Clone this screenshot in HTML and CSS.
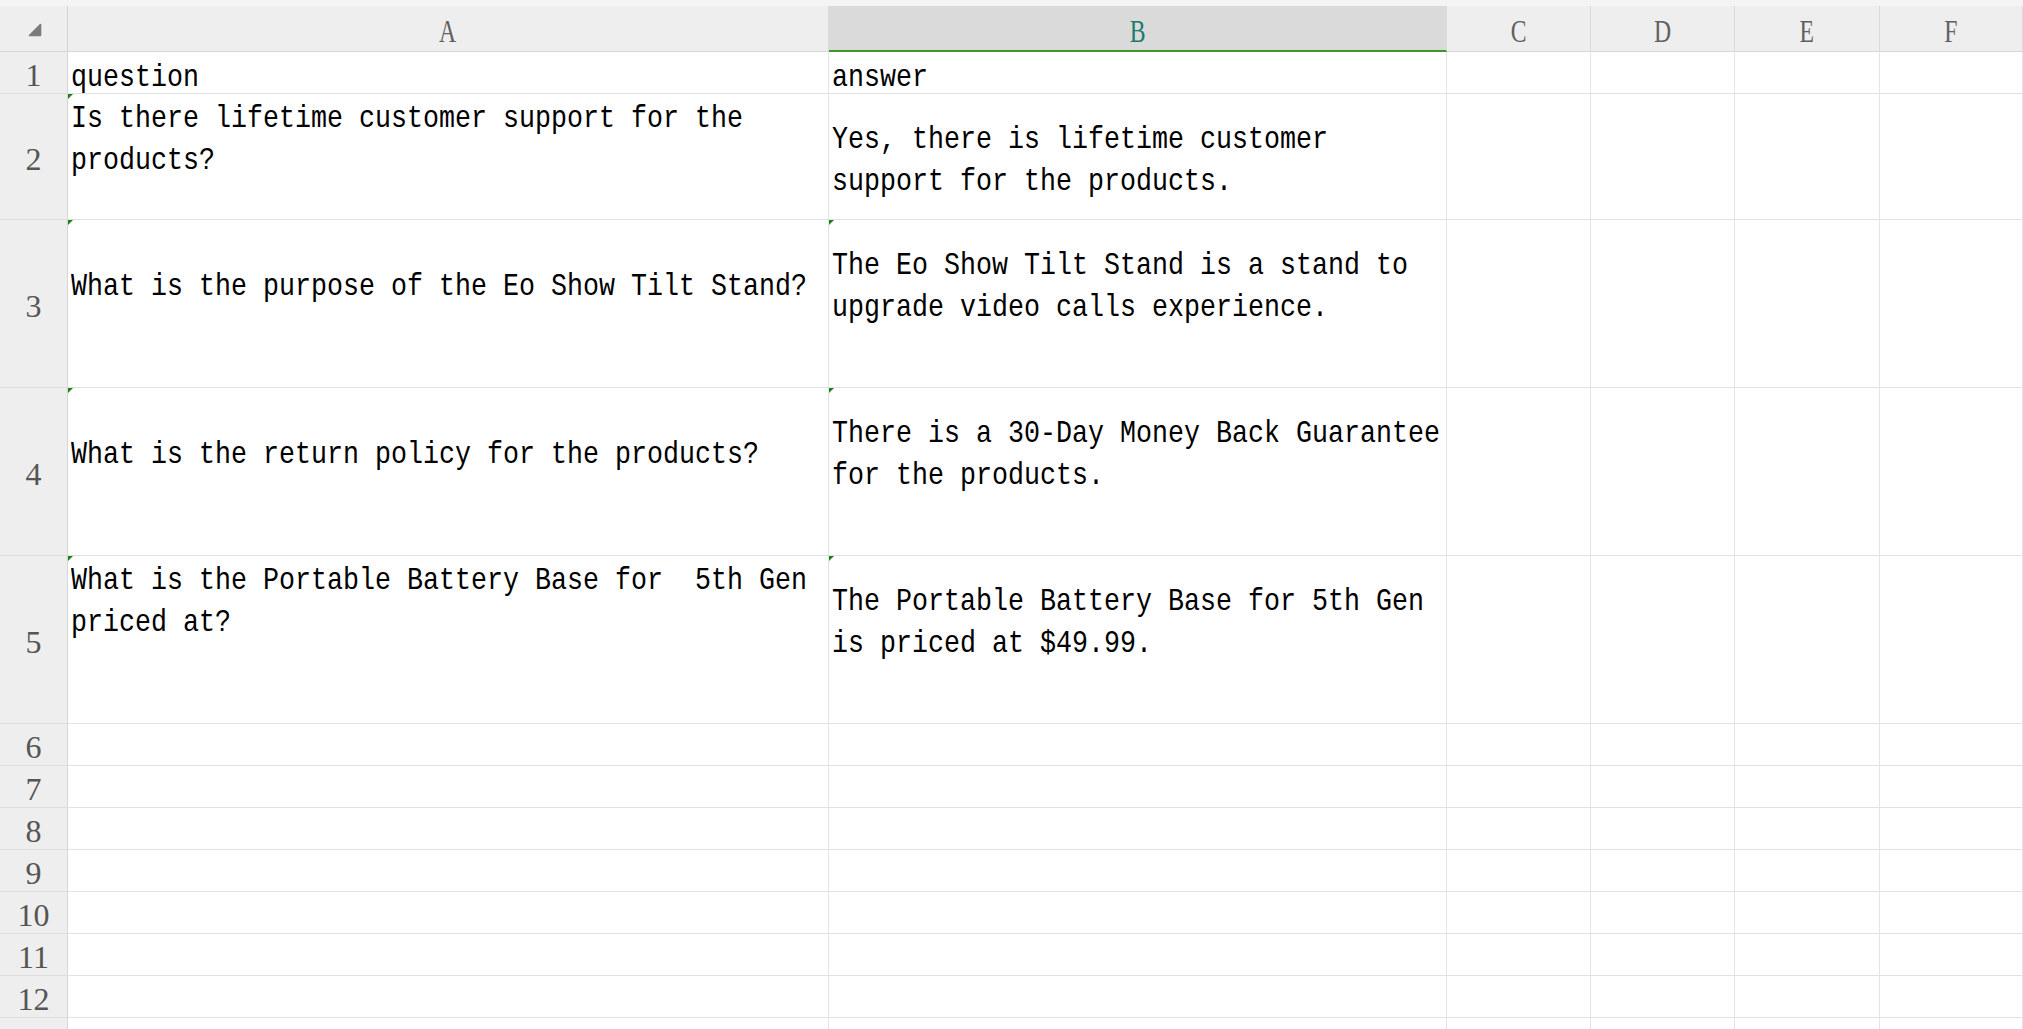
FILE: index.html
```html
<!DOCTYPE html>
<html lang="en">

<head>
    <meta charset="UTF-8">
    <meta name="viewport" content="width=device-width, initial-scale=1.0">
    <title>Sheet1</title>
    <link rel="stylesheet" href="styles.css">
</head>

<body>
    <div class="sheet">
        <div class="corner">
            <svg width="14" height="14" viewBox="0 0 14 14">
                <path d="M12.5 1.5 L12.5 12.5 L1.5 12.5 Z" fill="#7b7b7b" stroke="#7b7b7b" stroke-width="1.6" stroke-linejoin="round" />
            </svg>
        </div>
        <div class="col"><span>A</span></div>
        <div class="col sel"><span>B</span></div>
        <div class="col"><span>C</span></div>
        <div class="col"><span>D</span></div>
        <div class="col"><span>E</span></div>
        <div class="col"><span>F</span></div>

        <!-- row 1 -->
        <div class="num">1</div>
        <div class="cell t0"><span class="txt">question</span></div>
        <div class="cell t0"><span class="txt">answer</span></div>
        <div class="cell"></div><div class="cell"></div><div class="cell"></div><div class="cell"></div>

        <!-- row 2 -->
        <div class="num">2</div>
        <div class="cell t1 flag"><span class="txt">Is there lifetime customer support for the<br>products?</span></div>
        <div class="cell t2"><span class="txt">Yes, there is lifetime customer<br>support for the products.</span></div>
        <div class="cell"></div><div class="cell"></div><div class="cell"></div><div class="cell"></div>

        <!-- row 3 -->
        <div class="num">3</div>
        <div class="cell t3 flag"><span class="txt">What is the purpose of the Eo Show Tilt Stand?</span></div>
        <div class="cell t2 flag"><span class="txt">The Eo Show Tilt Stand is a stand to<br>upgrade video calls experience.</span></div>
        <div class="cell"></div><div class="cell"></div><div class="cell"></div><div class="cell"></div>

        <!-- row 4 -->
        <div class="num">4</div>
        <div class="cell t3 flag"><span class="txt">What is the return policy for the products?</span></div>
        <div class="cell t2 flag"><span class="txt">There is a 30-Day Money Back Guarantee<br>for the products.</span></div>
        <div class="cell"></div><div class="cell"></div><div class="cell"></div><div class="cell"></div>

        <!-- row 5 -->
        <div class="num">5</div>
        <div class="cell t1 flag"><span class="txt">What is the Portable Battery Base for  5th Gen<br>priced at?</span></div>
        <div class="cell t2 flag"><span class="txt">The Portable Battery Base for 5th Gen<br>is priced at $49.99.</span></div>
        <div class="cell"></div><div class="cell"></div><div class="cell"></div><div class="cell"></div>

        <!-- empty rows -->
        <div class="num">6</div>
        <div class="cell"></div><div class="cell"></div><div class="cell"></div><div class="cell"></div><div class="cell"></div><div class="cell"></div>
        <div class="num">7</div>
        <div class="cell"></div><div class="cell"></div><div class="cell"></div><div class="cell"></div><div class="cell"></div><div class="cell"></div>
        <div class="num">8</div>
        <div class="cell"></div><div class="cell"></div><div class="cell"></div><div class="cell"></div><div class="cell"></div><div class="cell"></div>
        <div class="num">9</div>
        <div class="cell"></div><div class="cell"></div><div class="cell"></div><div class="cell"></div><div class="cell"></div><div class="cell"></div>
        <div class="num">10</div>
        <div class="cell"></div><div class="cell"></div><div class="cell"></div><div class="cell"></div><div class="cell"></div><div class="cell"></div>
        <div class="num">11</div>
        <div class="cell"></div><div class="cell"></div><div class="cell"></div><div class="cell"></div><div class="cell"></div><div class="cell"></div>
        <div class="num">12</div>
        <div class="cell"></div><div class="cell"></div><div class="cell"></div><div class="cell"></div><div class="cell"></div><div class="cell"></div>
        <div class="num"></div>
        <div class="cell"></div><div class="cell"></div><div class="cell"></div><div class="cell"></div><div class="cell"></div><div class="cell"></div>
    </div>
</body>

</html>
```

FILE: styles.css
```css
body {
    margin: 0;
    height: 1029px;
    overflow: hidden;
    background-color: #f4f4f4;
}

.sheet {
    display: grid;
    grid-template-columns: 68px 761px 618px 144px 144px 145px 1fr;
    grid-template-rows: 46px 42px 126px 168px 168px 168px repeat(8, 42px);
    padding-top: 6px;
    background-color: #fff;
    box-shadow: inset 0 6px 0 #f4f4f4;
}

/* headers */

.corner {
    background-color: #eeeeee;
    border-right: 1px solid #d6d6d6;
    border-bottom: 1px solid #d6d6d6;
    box-sizing: border-box;
    padding: 17px 0 0 28px;
}

.corner svg {
    display: block;
}

.col {
    display: flex;
    justify-content: center;
    box-sizing: border-box;
    padding-top: 4px;
    background-color: #eeeeee;
    border-right: 1px solid #dadada;
    border-bottom: 1px solid #d6d6d6;
    font-family: "Liberation Serif", serif;
    font-size: 32px;
    line-height: 42px;
    color: #606060;
}

.col span {
    display: inline-block;
    transform: scaleX(0.74);
}

.col.sel {
    background-color: #dadada;
    border-bottom: 2px solid #3f952a;
    color: #1b7b6c;
}

.num {
    display: flex;
    justify-content: center;
    align-items: center;
    box-sizing: border-box;
    padding-top: 5px;
    background-color: #eeeeee;
    border-right: 1px solid #d6d6d6;
    border-bottom: 1px solid #dedede;
    font-family: "Liberation Serif", serif;
    font-size: 32px;
    color: #555;
}

/* cells */

.cell {
    position: relative;
    box-sizing: border-box;
    padding-left: 3px;
    border-right: 1px solid #e4e4e4;
    border-bottom: 1px solid #e1e1e1;
    background-color: #fff;
}

.cell .txt {
    display: block;
    width: max-content;
    white-space: pre;
    font-family: "Liberation Mono", monospace;
    font-size: 32px;
    line-height: 42px;
    color: #000;
    transform: scaleX(0.8333);
    transform-origin: 0 0;
}

.t0 {
    padding-top: 5px;
}

.t1 {
    padding-top: 4px;
}

.t2 {
    padding-top: 25px;
}

.t3 {
    padding-top: 46px;
}

.flag::before {
    content: "";
    position: absolute;
    top: 0;
    left: 0;
    border-top: 5px solid #1d7f1d;
    border-right: 5px solid transparent;
}
```
